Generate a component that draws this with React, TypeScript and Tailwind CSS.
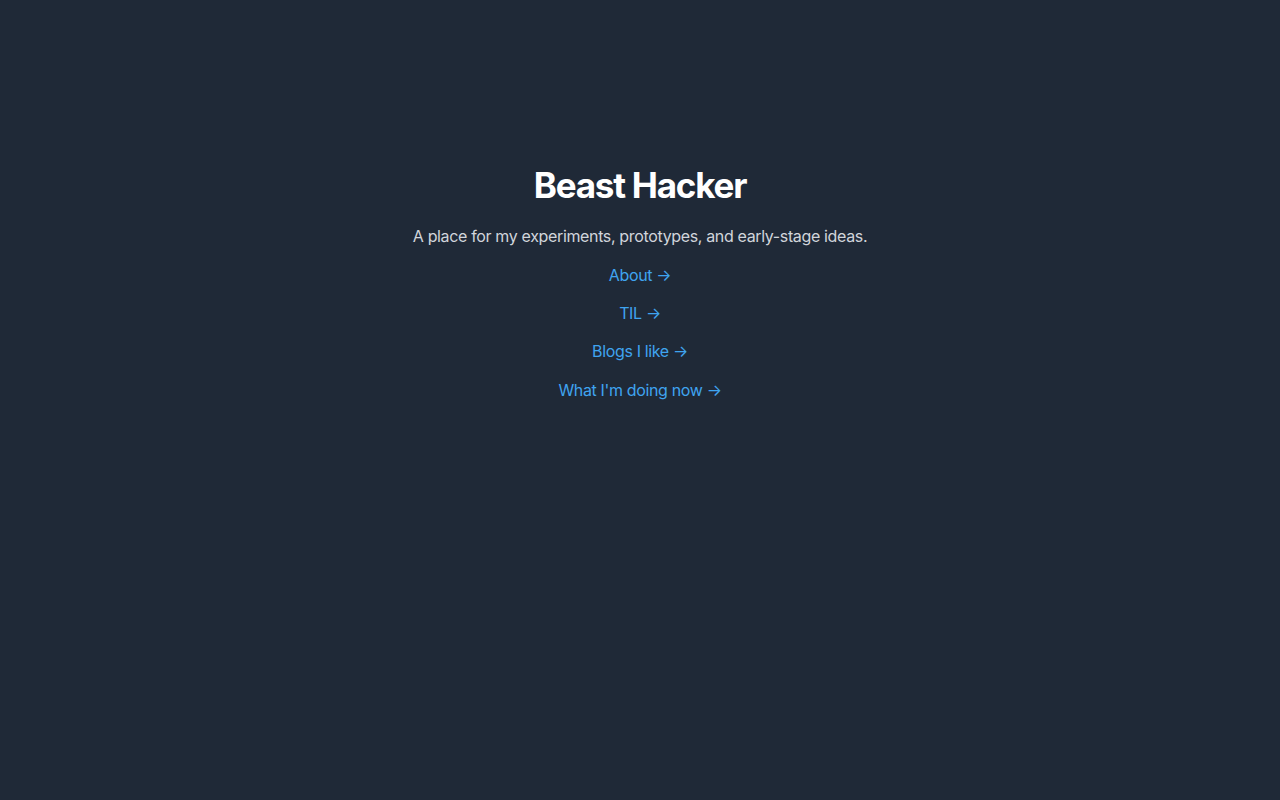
const LINKS = ['About', 'TIL', 'Blogs I like', "What I'm doing now"]

export default function App() {
    return (
        <div
            className="min-h-screen bg-[#1f2937] flex flex-col items-center pt-[165px] text-center"
            style={{ fontFamily: 'Inter, "Noto Sans", sans-serif' }}
        >
            <h1 className="text-[35px] leading-10 font-bold text-white tracking-[-0.035em]">Beast Hacker</h1>
            <p className="mt-[19px] text-base leading-6 text-[#d1d5db] tracking-[-0.022em]">
                A place for my experiments, prototypes, and early-stage ideas.
            </p>
            <nav className="mt-[15px] flex flex-col items-center gap-[14px] tracking-[-0.022em]">
                {LINKS.map((label, i) => (
                    <a
                        key={label}
                        href="#"
                        className={`text-base leading-6 text-[#3fa4f0] hover:underline ${i === 3 ? 'mt-[1px]' : ''}`}
                    >
                        {label} →
                    </a>
                ))}
            </nav>
        </div>
    )
}
